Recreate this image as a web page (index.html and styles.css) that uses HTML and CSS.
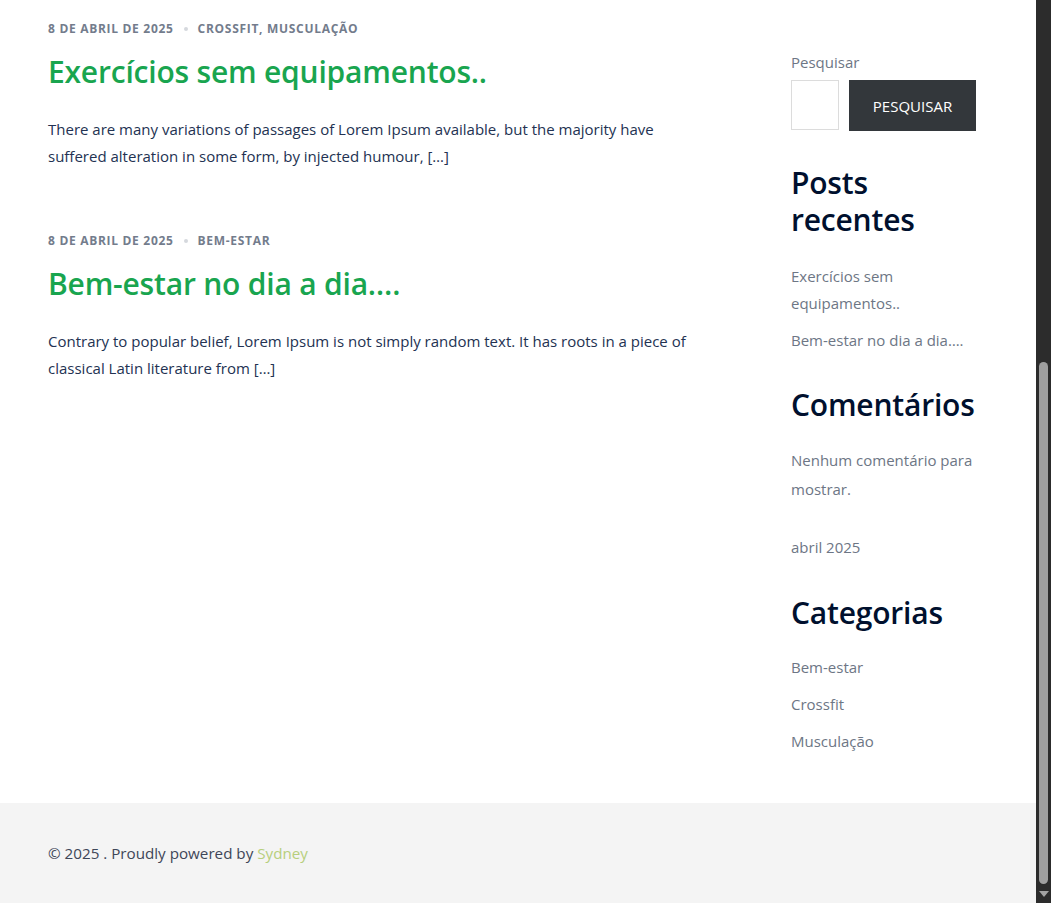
FILE: index.html
```html
<!DOCTYPE html>
<html lang="pt-BR">
<head>
<meta charset="utf-8">
<title>Blog</title>
<link rel="stylesheet" href="styles.css">
</head>
<body>
<div class="page">
  <div class="main">
    <div class="content">
      <article class="post">
        <div class="meta"><span>8 de abril de 2025</span><span class="dot"></span><span>Crossfit, Musculação</span></div>
        <h2 class="post-title">Exercícios sem equipamentos..</h2>
        <p class="excerpt">There are many variations of passages of Lorem Ipsum available, but the majority have suffered alteration in some form, by injected humour, […]</p>
      </article>
      <article class="post">
        <div class="meta"><span>8 de abril de 2025</span><span class="dot"></span><span>Bem-estar</span></div>
        <h2 class="post-title">Bem-estar no dia a dia….</h2>
        <p class="excerpt">Contrary to popular belief, Lorem Ipsum is not simply random text. It has roots in a piece of classical Latin literature from […]</p>
      </article>
    </div>
    <aside class="sidebar">
      <div class="widget search">
        <label class="search-label">Pesquisar</label>
        <div class="search-row">
          <span class="search-input"></span>
          <span class="search-btn">PESQUISAR</span>
        </div>
      </div>
      <div class="widget recent-widget">
        <h3 class="widget-title">Posts recentes</h3>
        <ul class="list recent">
          <li>Exercícios sem equipamentos..</li>
          <li>Bem-estar no dia a dia….</li>
        </ul>
      </div>
      <div class="widget">
        <h3 class="widget-title">Comentários</h3>
        <p class="no-comments">Nenhum comentário para mostrar.</p>
      </div>
      <div class="widget archive">abril 2025</div>
      <div class="widget">
        <h3 class="widget-title">Categorias</h3>
        <ul class="list cats">
          <li>Bem-estar</li>
          <li>Crossfit</li>
          <li>Musculação</li>
        </ul>
      </div>
    </aside>
  </div>
  <footer class="footer">© 2025 . Proudly powered by <span class="brand">Sydney</span></footer>
</div>
<div class="scrollbar">
  <div class="track-space"></div>
  <div class="thumb"></div>
  <div class="arrow"></div>
</div>
</body>
</html>
```
FILE: styles.css
```css
html, body {
  margin: 0;
  padding: 0;
}
body {
  height: 903px;
  overflow: hidden;
  display: flex;
  font-family: "Open Sans", "Noto Sans", sans-serif;
  color: #233252;
  background: #fff;
}
.page {
  flex: 1;
  display: flex;
  flex-direction: column;
  min-width: 0;
}
.main {
  flex: 1;
  display: flex;
  padding: 20px 0 0 48px;
}
.content {
  width: 660px;
}
.post {
  margin-bottom: 62px;
}
.meta {
  display: flex;
  align-items: center;
  gap: 9px;
  font-size: 12px;
  font-weight: 700;
  letter-spacing: 0.7px;
  text-transform: uppercase;
  color: #737c8c;
  line-height: 18px;
}
.dot {
  width: 4px;
  height: 4px;
  border-radius: 50%;
  background: #d5d8dd;
  margin: 0 1px;
}
.post-title {
  margin: 14px 0 0;
  font-size: 30px;
  font-weight: 600;
  line-height: 40px;
  color: #19a54f;
  letter-spacing: -0.2px;
}
.excerpt {
  margin: 24px 0 0;
  font-size: 15px;
  line-height: 27px;
  color: #233252;
}
.sidebar {
  margin-left: 83px;
  width: 186px;
  padding-top: 31px;
}
.widget {
  margin-bottom: 30px;
}
.search-label {
  display: block;
  font-size: 15px;
  line-height: 22px;
  color: #6d7685;
}
.search-row {
  display: flex;
  gap: 10px;
  margin-top: 7px;
}
.search-input {
  width: 46px;
  height: 48px;
  border: 1px solid #dcdcdc;
}
.search-btn {
  width: 127px;
  height: 51px;
  background: #33373b;
  color: #fff;
  font-size: 15px;
  display: flex;
  align-items: center;
  justify-content: center;
}
.widget-title {
  margin: 0;
  font-size: 30px;
  font-weight: 600;
  line-height: 37px;
  color: #00102e;
  letter-spacing: -0.2px;
}
.search {
  margin-bottom: 33px;
}
.list {
  list-style: none;
  margin: 0;
  padding: 0;
  font-size: 15px;
  color: #6d7685;
}
.recent {
  margin-top: 25px;
}
.recent li {
  line-height: 27px;
  margin-bottom: 10px;
}
.recent-widget {
  margin-bottom: 32px;
}
.no-comments {
  margin: 23px 0 0;
  font-size: 15px;
  line-height: 29px;
  color: #6d7685;
}
.archive {
  font-size: 15px;
  line-height: 27px;
  color: #6d7685;
  margin-top: 22px;
  margin-bottom: 33px;
}
.cats {
  margin-top: 23px;
}
.cats li {
  line-height: 27px;
  margin-bottom: 10px;
}
.footer {
  height: 100px;
  background: #f4f4f4;
  box-sizing: border-box;
  padding: 38px 0 0 48px;
  font-size: 15.2px;
  line-height: 24px;
  color: #3e4658;
}
.brand {
  color: #b7cf7c;
}
.scrollbar {
  width: 15px;
  background: #2c2c2c;
  display: flex;
  flex-direction: column;
  align-items: center;
}
.track-space {
  flex: 1;
}
.thumb {
  width: 9px;
  height: 522px;
  background: #9f9f9f;
  border-radius: 5px;
}
.arrow {
  height: 19px;
  width: 15px;
  display: flex;
  align-items: center;
  justify-content: center;
}
.arrow::before {
  content: "";
  border-left: 5px solid transparent;
  border-right: 5px solid transparent;
  border-top: 6px solid #a3a3a3;
}
```
